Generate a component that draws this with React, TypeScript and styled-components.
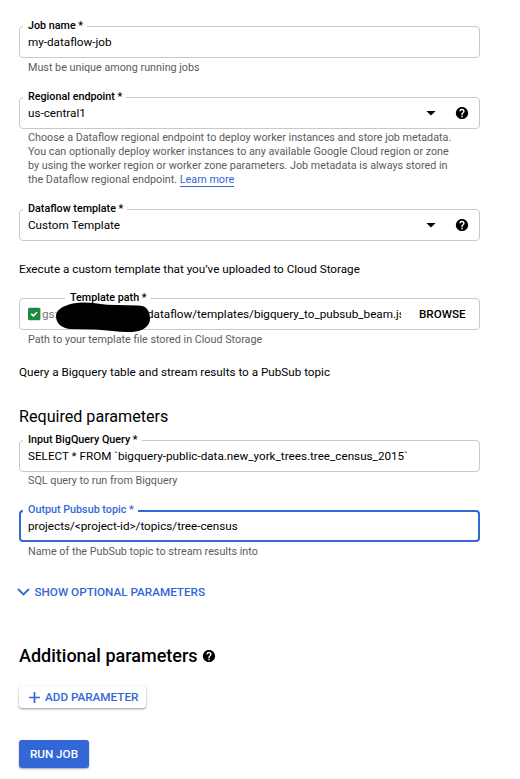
import React from 'react';
import styled, { createGlobalStyle, css } from 'styled-components';

const BLUE = '#3367d6';

const GlobalStyle = createGlobalStyle`
  body {
    margin: 0;
    background: #fff;
    color: #000;
    font-family: Roboto, 'Liberation Sans', sans-serif;
    font-size: 11.7px;
  }
  *, *::before, *::after { box-sizing: border-box; }
`;

const Form = styled.main`
  display: flex;
  flex-direction: column;
  align-items: flex-start;
  width: 520px;
  height: 779px;
  padding: 26px 40px 0 19px;
  overflow: hidden;
`;

const FieldRoot = styled.section<{ $gap: number }>`
  width: 461px;
  margin-bottom: ${(p) => p.$gap}px;
`;

const Outline = styled.div<{ $focused?: boolean }>`
  position: relative;
  display: flex;
  align-items: center;
  height: 32px;
  padding: 0 8px;
  border: 1px solid #c9c9c9;
  border-radius: 4px;
  ${(p) => p.$focused && css`
    border: 2px solid ${BLUE};
    padding: 0 7px;
  `}
`;

const Label = styled.label<{ $inset?: boolean; $focused?: boolean }>`
  position: absolute;
  top: ${(p) => (p.$focused ? -9 : -8)}px;
  left: ${(p) => (p.$inset ? 45 : p.$focused ? 2 : 3)}px;
  padding: 0 4px 0 5px;
  background: #fff;
  color: ${(p) => (p.$focused ? BLUE : '#000')};
  font-size: 10.76px;
  font-weight: 500;
  line-height: 14px;
  white-space: nowrap;
`;

const Value = styled.div`
  flex: 1;
  min-width: 0;
  overflow: hidden;
  line-height: 16px;
  white-space: nowrap;
`;

const Helper = styled.p<{ $offset?: number }>`
  margin: ${(p) => p.$offset ?? 2}px 0 0;
  padding-left: 9px;
  color: #5c5c5c;
  font-size: 10.78px;
  line-height: 14px;
  white-space: nowrap;
`;

const LearnMore = styled.a`
  color: ${BLUE};
  text-decoration: none;
  box-shadow: 0 1px 0 ${BLUE};
`;

const SelectIcons = styled.div`
  display: flex;
  align-items: center;
  gap: 20px;
  padding-right: 3px;
`;

const Icon = styled.svg`
  display: block;
  flex: none;
  overflow: visible;
`;

const PathInput = styled.div`
  position: relative;
  display: flex;
  align-items: center;
  width: 372.7px;
  margin-right: 18.3px;
`;

const Bucket = styled.span`
  width: 107px;
  padding-left: 2px;
  color: #757575;
`;

const PathText = styled.span`
  flex: 1;
  min-width: 0;
  overflow: hidden;
  line-height: 16px;
  white-space: nowrap;
`;

const Redaction = styled.svg`
  position: absolute;
  left: 28px;
  top: -5px;
`;

const Browse = styled.button`
  padding: 0;
  border: 0;
  background: none;
  color: #000;
  font: 500 11.67px/16px Roboto, sans-serif;
`;

const Note = styled.p<{ $gap: number }>`
  margin: 0 0 ${(p) => p.$gap}px;
  line-height: 16px;
`;

const Subheading = styled.h2`
  margin: 0 0 13px;
  font-size: 16.13px;
  font-weight: 400;
  line-height: 20px;
`;

const Heading = styled.h2`
  display: flex;
  align-items: center;
  gap: 5.5px;
  margin: 0 0 18px;
  font-size: 18px;
  font-weight: 500;
  line-height: 24px;
`;

const Button = styled.button`
  display: flex;
  align-items: center;
  border: 0;
  border-radius: 3px;
  background: none;
  color: ${BLUE};
  font: 500 11.7px/16px Roboto, sans-serif;
  white-space: nowrap;
`;

const ExpandButton = styled(Button)`
  gap: 4.5px;
  margin: 0 0 44px -2px;
  padding: 0;
`;

const AddButton = styled(Button)`
  gap: 5.5px;
  width: 127px;
  height: 22px;
  margin-bottom: 32px;
  padding: 0 0 0 9.5px;
  background: #fff;
  box-shadow: 0 1px 2px rgba(0, 0, 0, 0.3), 0 1px 3px rgba(0, 0, 0, 0.14);
`;

const RunButton = styled(Button)`
  justify-content: center;
  width: 70px;
  height: 28px;
  padding: 0;
  background: ${BLUE};
  color: #fff;
  box-shadow: 0 1px 2px rgba(0, 0, 0, 0.35);
`;

const HelpIcon = () => (
  <Icon width="12" height="12" viewBox="2.200 2.200 19.600 19.600">
    <path d="M12 2C6.48 2 2 6.48 2 12s4.48 10 10 10 10-4.48 10-10S17.52 2 12 2zm1.2 17h-2.4v-2.4h2.4V19zm2.3-7.7-.9.9c-.9.9-1.4 1.5-1.4 3h-2.4v-.5c0-1.1.5-2.1 1.2-2.9l1.2-1.2c.4-.4.6-.9.6-1.4a1.8 1.8 0 0 0-3.6 0H7.8a4.2 4.2 0 0 1 8.4 0c0 .9-.3 1.6-.7 2.1z" />
  </Icon>
);

const SelectControls = () => (
  <SelectIcons>
    <Icon width="10" height="5" viewBox="0 0 10 5">
      <path d="M.4 0h9.2L5 4.6z" />
    </Icon>
    <HelpIcon />
  </SelectIcons>
);

const ValidMark = () => (
  <Icon width="12" height="12" viewBox="0 0 12 12">
    <rect y="-.3" width="12.4" height="12.5" rx="1.5" fill="#1e8842" />
    <path d="m3.3 5.9 2 2 3.7-3.7" fill="none" stroke="#fff" strokeWidth="1.6" />
  </Icon>
);

type FieldProps = {
  label: string;
  value: React.ReactNode;
  helper?: React.ReactNode;
  helperOffset?: number;
  trailing?: React.ReactNode;
  gap: number;
  focused?: boolean;
};

const Field = ({ label, value, helper, helperOffset, trailing, gap, focused }: FieldProps) => (
  <FieldRoot $gap={gap}>
    <Outline $focused={focused}>
      <Label $focused={focused}>{label} *</Label>
      <Value>{value}</Value>
      {trailing}
    </Outline>
    {helper && <Helper $offset={helperOffset}>{helper}</Helper>}
  </FieldRoot>
);

export default function App() {
  return (
    <>
      <GlobalStyle />
      <Form>
        <Field
          label="Job name"
          value="my-dataflow-job"
          helper="Must be unique among running jobs"
          helperOffset={3}
          gap={22}
        />
        <Field
          label="Regional endpoint"
          value="us-central1"
          trailing={<SelectControls />}
          gap={22}
          helper={
            <>
              Choose a Dataflow regional endpoint to deploy worker instances and store job metadata.
              <br />
              You can optionally deploy worker instances to any available Google Cloud region or zone
              <br />
              by using the worker region or worker zone parameters. Job metadata is always stored in
              <br />
              the Dataflow regional endpoint. <LearnMore>Learn more</LearnMore>
            </>
          }
        />
        <Field label="Dataflow template" value="Custom Template" trailing={<SelectControls />} gap={20} />
        <Note $gap={21}>Execute a custom template that you’ve uploaded to Cloud Storage</Note>

        <FieldRoot $gap={17}>
          <Outline>
            <Label $inset>Template path *</Label>
            <PathInput>
              <ValidMark />
              <Bucket>gs://</Bucket>
              <PathText>dataflow/templates/bigquery_to_pubsub_beam.json</PathText>
              <Redaction width="96" height="32" viewBox="0 0 96 32">
                <path d="M0 15C0 8.500 8 4.500 17 2.500C29 0 39 2.500 51 3.700L82 4.500C90 4.500 93.500 9 94 17C94.500 25 87 30.500 76 31C64 31.500 53 29.500 40 28.500L14 28C5 27 0 22 0 15Z" />
              </Redaction>
            </PathInput>
            <Browse>BROWSE</Browse>
          </Outline>
          <Helper $offset={3}>Path to your template file stored in Cloud Storage</Helper>
        </FieldRoot>
        <Note $gap={27}>Query a Bigquery table and stream results to a PubSub topic</Note>

        <Subheading>Required parameters</Subheading>
        <Field
          label="Input BigQuery Query"
          value="SELECT * FROM `bigquery-public-data.new_york_trees.tree_census_2015`"
          helper="SQL query to run from Bigquery"
          gap={22}
        />
        <Field
          label="Output Pubsub topic"
          value="projects/<project-id>/topics/tree-census"
          helper="Name of the PubSub topic to stream results into"
          helperOffset={3}
          gap={25}
          focused
        />
        <ExpandButton>
          <Icon width="13" height="8" viewBox="0 0 13 8">
            <path d="m1 1 5.5 5.5L12 1" fill="none" stroke={BLUE} strokeWidth="1.8" />
          </Icon>
          SHOW OPTIONAL PARAMETERS
        </ExpandButton>

        <Heading>
          Additional parameters
          <HelpIcon />
        </Heading>
        <AddButton>
          <Icon width="11" height="11" viewBox="0 0 11 11">
            <path d="M5.5 0v11M0 5.5h11" stroke={BLUE} strokeWidth="1.7" />
          </Icon>
          ADD PARAMETER
        </AddButton>
        <RunButton>RUN JOB</RunButton>
      </Form>
    </>
  );
}
